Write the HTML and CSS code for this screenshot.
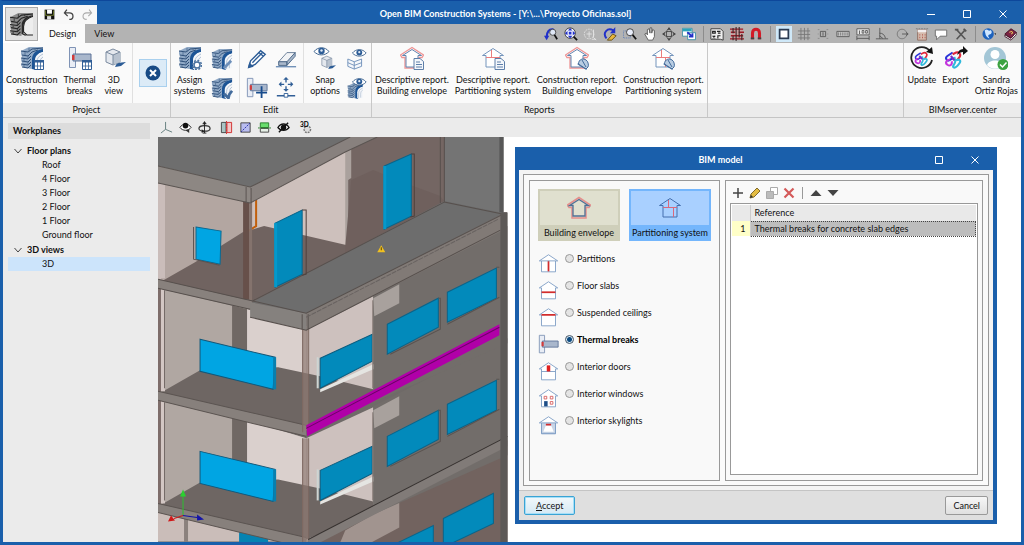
FILE: index.html
```html
<!DOCTYPE html>
<html lang="en">
<head>
    <meta charset="UTF-8">
    <meta name="viewport" content="width=device-width, initial-scale=1.0">
    <title>Open BIM Construction Systems</title>
    <link rel="stylesheet" href="styles.css">
</head>
<body>
    <!-- Shared icons -->
    <svg class="sprite" aria-hidden="true">
        <symbol id="layers" viewBox="0 0 24 24">
            <path d="M1 5 9 1h14v3l-7 2-4 6v11l-6-1-5-2 1-3-1-3 1-3-1-3z" fill="#90a9c6"/>
            <path d="M1 5l7 1 4-3 11-1M2 9l6 1 4-4 6-2M1 12l7 1 3-3M2 15l6 1 3-3M1 18l7 1 3-3M2 21l6 1 3-3" fill="none" stroke="#2f5079" stroke-width="1"/>
            <path d="M5 6v3M9 2v4M4 13v2M8 10v3M8 16v3M4 19v2M15 2v2" fill="none" stroke="#4b6a90" stroke-width=".8"/>
            <path d="M23 3c-7 1-10 4-11 9v11l4 1V13c1-4 3-6 7-7z" fill="#1c5495"/>
            <path d="M23 6c-5 1-8 4-8 8v9h3l5-1z" fill="#f3f6fa"/>
            <path d="M23 8c-4 2-6 4-6 8v7M23 11c-2 1-3 3-3 6v5" fill="none" stroke="#9fb2c8" stroke-width=".8"/>
        </symbol>
        <symbol id="layers-dark" viewBox="0 0 24 24">
            <path d="M1 5 9 1h14v3l-7 2-4 6v11l-6-1-5-2 1-3-1-3 1-3-1-3z" fill="#8c8c8c"/>
            <path d="M1 5l7 1 4-3 11-1M2 9l6 1 4-4 6-2M1 12l7 1 3-3M2 15l6 1 3-3M1 18l7 1 3-3M2 21l6 1 3-3" fill="none" stroke="#222" stroke-width="1"/>
            <path d="M5 6v3M9 2v4M4 13v2M8 10v3M8 16v3M4 19v2M15 2v2" fill="none" stroke="#333" stroke-width=".8"/>
            <path d="M23 3c-7 1-10 4-11 9v9l4 2V13c1-4 3-6 7-7z" fill="#2a2a2a"/>
            <path d="M23 4c-6 2-9 5-9 10v7l9 1z" fill="#eee"/>
            <path d="M23 4c-6 2-9 5-9 10v5l3 3h6" fill="none" stroke="#222"/>
        </symbol>
        <symbol id="sheet" viewBox="0 0 24 24">
            <path d="M14.500 14.500h9v9h-9z" fill="#fff" stroke="#315f97"/>
            <path d="M14 14h10v2.500H14z" fill="#315f97"/>
            <path d="M14 20h10M17.500 15v8M20.500 15v8" stroke="#315f97" stroke-width=".8" fill="none"/>
        </symbol>
        <symbol id="tbreak" viewBox="0 0 24 24">
            <path d="M1.500 1.500h6v20h-6z" fill="#e9edf5" stroke="#7f93b5"/>
            <path d="M5 8h18v7H5z" fill="#a9b7cc" stroke="#5c7398"/>
            <path d="M4 9h2.500v5H4z" fill="#d23b3b"/>
        </symbol>
        <symbol id="house" viewBox="0 0 24 24">
            <path d="M.5 9 12 1.500 23.500 9 22 11.500h-3V22H5V11.500H2z" fill="#fff" stroke="#ee9595" stroke-width="1.300"/>
            <path d="M2.500 9.500 12 3.500l9.500 6H18V21H6V9.500z" fill="none" stroke="#6084b0"/>
        </symbol>
        <symbol id="house-parts" viewBox="0 0 24 24">
            <path d="M1.500 9.500 12 2.500l10.500 7H19V21H5V9.500z" fill="#fff" stroke="#7595bc"/>
            <path d="M5 11.500h14M10.500 4v7.500M14.500 11.500V21" stroke="#ec7e7e" fill="none"/>
        </symbol>
        <symbol id="outline" viewBox="0 0 24 24">
            <path d="M1.500 9 12 2l10.500 7H20v12.500H4V9z" fill="#fff" stroke="#7b9cc4"/>
        </symbol>
        <symbol id="doc" viewBox="0 0 24 24">
            <path d="M14 12.500h6l3.500 3v8H14z" fill="#f4f7fb" stroke="#5e7fa9"/>
            <path d="M16 16h4M16 18.500h6M16 21h6" stroke="#5e7fa9" fill="none"/>
        </symbol>
        <symbol id="helmet" viewBox="0 0 24 24">
            <path d="M13.500 18c0-5 5-6 7.500-4 2 1 3 5 2 7l-2 2z" fill="#b9cde2" stroke="#446c9c"/>
            <path d="m12.500 18 9 5.500M17 14l4 7" stroke="#446c9c" fill="none"/>
        </symbol>
        <symbol id="eye" viewBox="0 0 24 24">
            <path d="M1 5.500C5 .5 12 .5 16 5.500 12 10 5 10 1 5.500z" fill="#fff" stroke="#40658f"/>
            <circle cx="8.500" cy="5" r="3.200" fill="#2c5c96"/><circle cx="8.500" cy="4.500" r="1.200" fill="#dfeaf6"/>
        </symbol>
        <symbol id="cube" viewBox="0 0 24 24">
            <path d="m15 17 9-1-5 4-6 1z" fill="#2c5c96"/>
            <path d="m4 6 7-3 7 3v10l-7 3-7-3z" fill="#e4e8ee" stroke="#7b8ba0"/>
            <path d="m11 9 7-3v10l-7 3z" fill="#b8c2cf"/>
            <path d="m4 6 7 3 7-3M11 9v10" fill="none" stroke="#7b8ba0"/>
        </symbol>
        <symbol id="knot" viewBox="0 0 24 24">
            <g fill="none" stroke-width="2.400">
                <path d="M11 4 5 8c-3 2-1 6 2 5l5-3" stroke="#2a35d8"/>
                <path d="m11 6 4-2c3-1 6 2 4 5l-3 4" stroke="#e0283c"/>
                <path d="M8 12c-4 0-6 4-3 6s6 0 5-4" stroke="#c435dd"/>
                <path d="m13 9 1 5c0 3-4 6-2 7s5-2 7-5-1-5-4-3" stroke="#2fb9dc"/>
                <path d="m9 8 4 5" stroke="#7a2bc8"/>
            </g>
        </symbol>
    </svg>

    <div class="window">
        <header class="app-head">
            <button class="app-menu" aria-label="Application menu"><svg viewBox="0 0 24 24"><use href="#layers-dark"/></svg></button>
            <div class="head-rows">
                <div class="titlebar">
                    <div class="quick">
                        <button aria-label="Save"><svg viewBox="0 0 16 16"><path d="M2 2h12v12H2z" fill="#111"/><path d="M5 2h6v5H5z" fill="#fff"/><path d="M3 3v6h10V3" fill="none" stroke="#7d8a33"/><path d="M5 10h5v4H5z" fill="#ddd"/></svg></button>
                        <button aria-label="Undo"><svg viewBox="0 0 16 16"><path d="M6 2 3 6l4 4M3 6h6c6 0 6 8 0 8" fill="none" stroke="#444" stroke-width="1.600"/></svg></button>
                        <button aria-label="Redo"><svg viewBox="0 0 16 16"><path d="m10 2 3 4-4 4M13 6H7c-6 0-6 8 0 8" fill="none" stroke="#aaa" stroke-width="1.300"/></svg></button>
                    </div>
                    <h1>Open BIM Construction Systems - [Y:\...\Proyecto Oficinas.sol]</h1>
                    <div class="win-buttons">
                        <button aria-label="Minimize"><svg viewBox="0 0 10 10"><path d="M1 5.500h8"/></svg></button>
                        <button aria-label="Maximize"><svg viewBox="0 0 10 10"><path d="M1.500 1.500h7v7h-7z"/></svg></button>
                        <button aria-label="Close"><svg viewBox="0 0 10 10"><path d="m1.500 1.500 7 7m0-7-7 7"/></svg></button>
                    </div>
                </div>
                <nav class="tabs">
                    <button class="tab active">Design</button>
                    <button class="tab">View</button>
                    <div class="tab-tools">
                        <div class="tool-set set-8">
                            <button aria-label="Previous view"><svg viewBox="0 0 16 16"><path d="M3 12C3 5 6 2 11 3" stroke="#2231c9" stroke-width="2.500" fill="none"/><path d="m0 10 6 0-3 5z" fill="#2231c9"/><circle cx="10" cy="6" r="3.500" fill="#dfe7f5" stroke="#444"/><path d="m12 9 3 5" stroke="#111" stroke-width="2"/></svg></button>
                            <button aria-label="Zoom all"><svg viewBox="0 0 16 16"><circle cx="7" cy="7" r="6" fill="#f1f3ff" stroke="#333"/><path d="m7 1 2.500 3h-5zM7 13l2.500-3h-5zM1 7l3-2.500v5zM13 7l-3-2.500v5zM5.500 5.500h3v3h-3z" fill="#2231c9"/><path d="m11 11 4 4" stroke="#111" stroke-width="2"/></svg></button>
                            <button aria-label="Zoom out"><svg viewBox="0 0 16 16"><circle cx="7" cy="8" r="5.500" fill="none" stroke="#e5e5e5" stroke-dasharray="2 1"/><path d="M7 5v7M4 8h6M12 3v9l3 3M10 14h5" fill="none" stroke="#e5e5e5"/></svg></button>
                            <button aria-label="Redraw"><svg viewBox="0 0 16 16"><path d="M4 13C-1 7 5 0 12 4" fill="none" stroke="#2231c9" stroke-width="2.200"/><path d="M14 0v7H8z" fill="#2231c9"/><path d="m5 15 6-7 4 2-5 5z" fill="#e8b53a" stroke="#5e4a17"/></svg></button>
                            <button aria-label="Zoom window"><svg viewBox="0 0 16 16"><path d="M.5 4.500h8v8h-8z" fill="none" stroke="#5577b5" stroke-dasharray="1 1"/><circle cx="8" cy="6" r="4" fill="#e9eefa" stroke="#333"/><path d="m11 9 4 5" stroke="#111" stroke-width="2"/></svg></button>
                            <button aria-label="Pan"><svg viewBox="0 0 16 16"><path d="m2 8 2-1 1 2V3l2-1 1 5V1h2v6l1-4 2 1v7l-2 4H6z" fill="#fff" stroke="#555"/></svg></button>
                            <button aria-label="Orbit"><svg viewBox="0 0 16 16"><ellipse cx="8" cy="8" rx="6" ry="3" fill="none" stroke="#444"/><ellipse cx="8" cy="8" rx="3" ry="6" fill="none" stroke="#444"/><path d="m8 0 2 3H6zM8 16l2-3H6zM0 8l3-2v4zM16 8l-3-2v4z" fill="#444"/></svg></button>
                            <button aria-label="Switch window"><svg viewBox="0 0 16 16"><path d="M.5 1.500h11v9H.5z" fill="#fff" stroke="#378da3"/><path d="M1 2h10v3H1z" fill="#2aa5ba"/><path d="M6.500 6.500h9v8h-9z" fill="#fff" stroke="#378da3"/><path d="m6 6 6 5m0-4v4H8" fill="none" stroke="#2231c9" stroke-width="2"/></svg></button>
                        </div>
                        <div class="tool-set set-3">
                            <button aria-label="DXF templates"><svg viewBox="0 0 16 16"><path d="M1 2h11l3 3v10l-3-1H1z" fill="#eee" stroke="#333"/><path d="M3 5h3v2H3zM8 5h4M9 7h3M3 10l3 3m0-3-3 3M9 13v-3h3" fill="none" stroke="#222" stroke-width="1.300"/></svg></button>
                            <button aria-label="Reference grid"><svg viewBox="0 0 16 16"><path d="M1 2h14v12H1z" fill="#c9a0a0"/><path d="M0 2.500h15M1 6h5M10 6h6M1 10h14M0 13.500h16" stroke="#9b1c27" stroke-width="1.500"/><path d="M3.500 1v6M7 0v16M10.500 0v12M13.500 8v7M3.500 10v5" stroke="#3d2a2c" stroke-width="1.300"/></svg></button>
                            <button aria-label="Object snaps"><svg viewBox="0 0 16 16"><path d="M4 14V7c0-6 8-6 8 0v7" fill="none" stroke="#d31c28" stroke-width="3.500"/><path d="M2 12h4v2H2zM10 12h4v2h-4z" fill="#444"/></svg></button>
                        </div>
                        <div class="tool-set set-10">
                            <button class="selected" aria-label="Frame"><svg viewBox="0 0 16 16"><path d="M3 3h10v10H3z" fill="#fff" stroke="#2b3b52" stroke-width="2"/></svg></button>
                            <button aria-label="Grid"><svg viewBox="0 0 16 16"><path d="M4.500 1v14M8.500 1v14M12.500 1v14M1 4.500h14M1 8.500h14M1 12.500h14" stroke="#777"/></svg></button>
                            <button aria-label="Snap point"><svg viewBox="0 0 16 16"><path d="M5 5h6v6H5z" fill="none" stroke="#555"/><path d="M8 6v4" stroke="#555"/><path d="M2 3h2M12 3h2M2 13h2M12 13h2M2 8h1M13 8h1" stroke="#888"/></svg></button>
                            <button aria-label="Keyboard"><svg viewBox="0 0 16 16"><path d="M1 5h14v6H1z" fill="#ccc" stroke="#555"/><path d="M2 7h12M2 9h12" stroke="#555" stroke-dasharray="1.500 1"/></svg></button>
                            <button aria-label="Dimensions"><svg viewBox="0 0 16 16"><path d="M1 2h14v7H1z" fill="#e8e8e8" stroke="#555"/><path d="M1 13h14M1 10v5M15 10v5M4 4v4M7 4h2v3H7zM11 4h2v3h-2z" fill="none" stroke="#555"/></svg></button>
                            <button aria-label="Angle"><svg viewBox="0 0 16 16"><path d="M1 13.500h14M5.500 1v12.500M5 7c4 0 6 2 7 6M5 10l4 3" fill="none" stroke="#555"/></svg></button>
                            <button aria-label="Polar"><svg viewBox="0 0 16 16"><circle cx="8" cy="8" r="5.500" fill="none" stroke="#777"/><path d="M8 8h7m-2-2 2 2-2 2" fill="none" stroke="#555"/></svg></button>
                            <button aria-label="Calculator"><svg viewBox="0 0 16 16"><path d="M3 3h10v12H3z" fill="#d6bcae" stroke="#8d6a5e"/><path d="M3 3h10v3H3z" fill="#f2eeee"/><path d="M5 9h1M8 9h1M11 9h1M5 12h1M8 12h1M11 12h1" stroke="#b0574c" stroke-width="1.500"/><path d="M1 2h14" stroke="#777" stroke-dasharray="2 1"/></svg></button>
                            <button aria-label="Comment"><svg viewBox="0 0 16 16"><path d="M1.500 3.500h13v7H7l-4 4v-4H1.500z" fill="#fff" stroke="#666"/></svg></button>
                            <button aria-label="Settings"><svg viewBox="0 0 16 16"><path d="m3 3 10 11M13 3 3 14" stroke="#555" stroke-width="1.700"/><path d="M1 3h4M11 2l3 3" stroke="#555" stroke-width="2"/></svg></button>
                        </div>
                        <div class="tool-set set-2">
                            <button aria-label="Web"><svg viewBox="0 0 16 16"><circle cx="7" cy="8" r="6.500" fill="#1d62bd"/><path d="M3 4c3-3 4 1 6 0s3 3 1 4-4 1-2 4-4-1-4-4z" fill="#cfe6ff"/><path d="M14 7h3l-1.500 2z" fill="#333"/></svg></button>
                            <button aria-label="Help"><svg viewBox="0 0 16 16"><path d="m1 8 7-6 6 4-6 7z" fill="#7d2444" stroke="#421226"/><path d="m1 9 7 4 6-7v3l-6 6-7-4z" fill="#fff" stroke="#421226"/><path d="m6 6 3-1 1 2-2 1" fill="none" stroke="#f5d75a"/></svg></button>
                        </div>
                    </div>
                </nav>
            </div>
        </header>

        <section class="ribbon">
            <div class="group">
                <div class="tools">
                    <button class="tool"><svg viewBox="0 0 24 24"><use href="#layers"/><use href="#sheet"/></svg>Construction<br>systems</button>
                    <button class="tool"><svg viewBox="0 0 24 24"><use href="#tbreak"/><use href="#sheet"/></svg>Thermal<br>breaks</button>
                    <button class="tool"><svg viewBox="0 0 24 24"><use href="#cube"/></svg>3D<br>view</button>
                    <span class="divider"></span>
                    <button class="tool-close" aria-label="Cancel tool"><svg viewBox="0 0 16 16"><circle cx="8" cy="8" r="7.500" fill="#174a85"/><path d="m5 5 6 6m0-6-6 6" stroke="#fff" stroke-width="2"/></svg></button>
                </div>
                <h2>Project</h2>
            </div>
            <div class="group">
                <div class="tools">
                    <button class="tool"><svg viewBox="0 0 24 24"><use href="#layers"/><circle cx="19" cy="19" r="3" fill="#fff" stroke="#4a729f" stroke-width="1.500"/><circle cx="19" cy="19" r="4.500" fill="none" stroke="#4a729f" stroke-width="1.500" stroke-dasharray="2 1.500"/></svg>Assign<br>systems</button>
                    <div class="stack">
                        <button aria-label="Edit system"><svg viewBox="0 0 24 24"><use href="#layers"/><path d="m14 22 8-8" stroke="#6d8fb9" stroke-width="3"/></svg></button>
                        <button aria-label="Copy system"><svg viewBox="0 0 24 24"><use href="#layers"/><path d="m14 18 5 5 1-4 3-4" fill="none" stroke="#446c9c" stroke-width="3"/></svg></button>
                    </div>
                    <span class="divider"></span>
                    <div class="stack two">
                        <button aria-label="Edit"><svg viewBox="0 0 24 24"><path d="m3 21 2-7L16 3l5 4-11 11z" fill="#fff" stroke="#2c5c96" stroke-width="1.500"/><path d="m7 16 11-11M14 5l5 4M3 21l4-1-3-3z" fill="#2c5c96" stroke="#2c5c96" stroke-width="1.500"/></svg></button>
                        <button aria-label="Erase"><svg viewBox="0 0 24 24"><path d="m4 15 9-10h9l-8 10z" fill="#f1f3f6" stroke="#667b95"/><path d="M4 15v4h9v-4zM13 15l9-10v4l-9 10z" fill="#a9b8ca" stroke="#496687"/><path d="M1 20.500h22" stroke="#2c5c96"/></svg></button>
                        <button aria-label="New thermal break"><svg viewBox="0 0 24 24"><use href="#tbreak"/><path d="M17 10v13M11 17h12" stroke="#174b8c" stroke-width="2"/></svg></button>
                        <button aria-label="Move"><svg viewBox="0 0 24 24"><path d="M12 2v4M12 10v4M6 8h4M14 8h4M2 20.500h20" stroke="#315f97" stroke-width="1.500"/><path d="m12 0 3 3H9zM12 16l3-3H9zM4 8l3-3v6zM20 8l-3-3v6z" fill="#315f97"/><path d="M10 18h4v4h-4z" fill="#fff" stroke="#315f97"/></svg></button>
                    </div>
                    <span class="divider"></span>
                    <button class="tool"><svg viewBox="0 0 24 24"><use href="#cube" x="6" y="8" width="17" height="17"/><use href="#eye"/></svg>Snap<br>options</button>
                    <div class="stack">
                        <button aria-label="Visible elements"><svg viewBox="0 0 24 24"><path d="m2 12 7 3 8-3v8l-8 3-7-3zM2 16l7 3 8-3M9 15v8" fill="#f4f7fb" stroke="#6d8fb9"/><use href="#eye" x="6"/></svg></button>
                        <button aria-label="Visible systems"><svg viewBox="0 0 24 24"><use href="#layers" x="1" y="6" width="18" height="18"/><use href="#eye" x="6"/></svg></button>
                    </div>
                </div>
                <h2>Edit</h2>
            </div>
            <div class="group">
                <div class="tools">
                    <button class="tool"><svg viewBox="0 0 24 24"><use href="#house"/><use href="#doc"/></svg>Descriptive report.<br>Building envelope</button>
                    <button class="tool"><svg viewBox="0 0 24 24"><use href="#house-parts"/><use href="#doc"/></svg>Descriptive report.<br>Partitioning system</button>
                    <button class="tool"><svg viewBox="0 0 24 24"><use href="#house"/><use href="#helmet"/></svg>Construction report.<br>Building envelope</button>
                    <button class="tool"><svg viewBox="0 0 24 24"><use href="#house-parts"/><use href="#helmet"/></svg>Construction report.<br>Partitioning system</button>
                </div>
                <h2>Reports</h2>
            </div>
            <div class="group filler">
                <div class="tools"></div>
                <h2></h2>
            </div>
            <div class="group">
                <div class="tools">
                    <button class="tool"><svg viewBox="0 0 24 24"><path d="M20 5a10.500 10.500 0 1 0 2 9" fill="none" stroke="#222" stroke-width="1.800"/><path d="m22 1 1 7-7-2z" fill="#111"/><use href="#knot" x="3" y="4" width="17" height="17"/></svg>Update</button>
                    <button class="tool"><svg viewBox="0 0 24 24"><use href="#knot" x="-1" y="3" width="21" height="21"/><path d="M13 9c1-4 3-6 6-6V0l5 5-5 4V6c-2 0-4 1-6 3z" fill="#111"/></svg>Export</button>
                    <button class="tool"><svg viewBox="0 0 24 24"><circle cx="11" cy="12" r="11" fill="#a3c6d6"/><circle cx="11" cy="8.500" r="4.500" fill="#fff"/><path d="M3 19c2-6 14-6 16 0-4 5-12 5-16 0z" fill="#fff"/><circle cx="19" cy="18.500" r="5.500" fill="#3da341"/><path d="m16 18.500 2.500 2.500 4-4.500" fill="none" stroke="#fff" stroke-width="1.500"/></svg>Sandra<br>Ortiz Rojas</button>
                </div>
                <h2>BIMserver.center</h2>
            </div>
        </section>

        <div class="workspace">
            <aside class="sidebar">
                <h2>Workplanes</h2>
                <ul class="tree">
                    <li>
                        <button class="branch"><svg viewBox="0 0 10 10"><path d="m1.500 3 3.500 4 3.500-4"/></svg>Floor plans</button>
                        <ul>
                            <li><button>Roof</button></li>
                            <li><button>4 Floor</button></li>
                            <li><button>3 Floor</button></li>
                            <li><button>2 Floor</button></li>
                            <li><button>1 Floor</button></li>
                            <li><button>Ground floor</button></li>
                        </ul>
                    </li>
                    <li>
                        <button class="branch"><svg viewBox="0 0 10 10"><path d="m1.500 3 3.500 4 3.500-4"/></svg>3D views</button>
                        <ul>
                            <li><button class="current">3D</button></li>
                        </ul>
                    </li>
                </ul>
            </aside>

            <main class="main">
                <div class="view-tools">
                    <button aria-label="Axes"><svg viewBox="0 0 14 14"><path d="M6 1v8M6 9l-5 4M6 9l7 3" fill="none" stroke="#5f7a7a"/></svg></button>
                    <button aria-label="Look"><svg viewBox="0 0 14 14"><path d="M1 7c3-5 9-5 12 0-3 4-9 4-12 0z" fill="#fff" stroke="#222"/><circle cx="7" cy="5" r="3" fill="#111"/><path d="m7 10 4 3v-4z" fill="#333"/></svg></button>
                    <button aria-label="Rotate"><svg viewBox="0 0 14 14"><ellipse cx="7" cy="8" rx="6" ry="3" fill="none" stroke="#333" stroke-width="1.300"/><path d="M7 2v11M5 13h4M5 3h4" stroke="#222"/><path d="m7 0 2 3H5zM4 9l3 2-3 2z" fill="#222"/></svg></button>
                    <button class="spaced" aria-label="Section X"><svg viewBox="0 0 14 14"><path d="M1.500 1.500h5v11h-5z" fill="#a9c4c4" stroke="#444"/><path d="M7.500 1.500h5v11h-5z" fill="#f2c9c9" stroke="#d02f2f"/><path d="M7 0v14" stroke="#d02f2f" stroke-dasharray="2 1"/></svg></button>
                    <button aria-label="Section Y"><svg viewBox="0 0 14 14"><path d="M2 2h10v10H2z" fill="#b9bdf0" stroke="#444"/><path d="M2 12 12 2" stroke="#2b32a8" stroke-dasharray="2 1"/></svg></button>
                    <button aria-label="Section Z"><svg viewBox="0 0 14 14"><path d="M2.500 2h9v5h-9z" fill="#68dd6d" stroke="#287c2b"/><path d="M2.500 8h9v4h-9z" fill="#e5efe5" stroke="#444"/><path d="M0 7.500h14" stroke="#287c2b" stroke-dasharray="2 1"/></svg></button>
                    <button aria-label="Hide"><svg viewBox="0 0 14 14"><path d="M1 7c3-5 9-5 12 0-3 4-9 4-12 0z" fill="#fff" stroke="#111" stroke-width="1.400"/><circle cx="7" cy="7" r="3" fill="#111"/><path d="M2 12 12 2" stroke="#111" stroke-width="1.500"/></svg></button>
                    <button class="spaced" aria-label="3D settings"><svg viewBox="0 0 14 14"><circle cx="9" cy="9" r="3.500" fill="#ddd" stroke="#777" stroke-width="1.500" stroke-dasharray="2 1"/><text x="1" y="6" font-size="7" font-weight="bold">3D</text></svg></button>
                </div>

                <div class="viewport">
                    <svg class="scene" viewBox="158 137 862 405" preserveAspectRatio="xMinYMin slice" role="img" aria-label="3D view of the building">
                        <defs>
                            <!-- One storey, seen from the corner -->
                            <g id="storey">
                                <path d="M158 287 248 308 306 326V426L158 392z" fill="#b0a7a2"/>
                                <path d="M232 305 247 309V380H232z" fill="#706864"/>
                                <path d="M247 308 306 326V426L247 400z" fill="#dad0cd"/>
                                <path d="M306 326 373 295V395L306 430z" fill="#cdc1be"/>
                                <path d="M165 390 200 370 278 367 320 376 373 389V398L306 427 158 393z" fill="#6e6663"/>
                                <path d="M158 287h3v105h-3z" fill="#7d6d6a"/>
                                <path d="M161 288h4v103h-4z" fill="#d3c7c4"/>
                                <path d="M164.500 290v98" stroke="#756b68"/>
                                <path d="M373 294 507 226V343L373 402z" fill="#726d6a"/>
                                <path d="M373 298 399 284V303L374 316z" fill="#a8a19d"/>
                                <path d="M158 391 306 425V436L158 400z" fill="#87807c"/>
                                <path d="M158 391 306 425M158 400 306 436" stroke="#5b5451" fill="none"/>
                                <path d="M302 326h6v104h-6z" fill="#8f7a73" opacity=".7"/>
                                <path d="M302.500 326v106M308.500 326v106" stroke="#7c6861" fill="none"/>
                                <path d="M200 339 275 357 273 389 200 371z" fill="#00a5e3" stroke="#12587a"/>
                                <path d="M273 357h3v32h-3z" fill="#087fae"/>
                                <path d="M320 389 373 364V369L320 392z" fill="#e5e5e2"/>
                                <path d="M320 358 372 334V361L320 388z" fill="#028abb" stroke="#0b5c7e"/>
                                <path d="M317.500 357v31" stroke="#cdd5d3" stroke-width="2"/>
                                <path d="M372.500 300v88" stroke="#857a76"/>
                                <path d="M387 324 438 298V327L387 354z" fill="#028abb" stroke="#0a648a"/>
                                <path d="M438 298h2v31l-50 25" fill="none" stroke="#5a5350"/>
                                <path d="M447 292 496 268V298L447 322z" fill="#028abb" stroke="#0a648a"/>
                                <path d="M496 267h3M447 324l52-27" fill="none" stroke="#5a5350"/>
                            </g>
                        </defs>
                        <path d="M158 137H503V212H507V542H158z" fill="#6f6a68"/>

                        <!-- Ground storey -->
                        <path d="M158 505 306 541H158z" fill="#cabdb9"/>
                        <path d="M184 510h4v32h-4z" fill="#8b817d"/>
                        <path d="M239 530 268 536V542H239z" fill="#0583b2"/>
                        <path d="M306 541 507 440V542H306z" fill="#72635f"/>
                        <path d="M345 530 399 499V527L371 542H340z" fill="#a1948f"/>
                        <path d="M398 542 433 525V542z" fill="#028abb" stroke="#0a648a"/>
                        <path d="M443 518 493 493V523L453 542H443z" fill="#028abb" stroke="#0a648a"/>

                        <use href="#storey" y="112"/>
                        <path d="M308 539 507 436V446L320 542H308z" fill="#817b78"/>
                        <path d="M308 539 507 436" stroke="#36312f" fill="none"/>
                        <use href="#storey"/>

                        <!-- Selected slab edge -->
                        <path d="M306 425 499 324V335L307 436z" fill="#b000a8"/>
                        <path d="M306 428 499 327" stroke="#6d0068" fill="none"/>

                        <!-- Top storey -->
                        <path d="M158 165 250 187V302L158 281z" fill="#b3a6a1"/>
                        <path d="M250 187 375 137H445V202L252 302z" fill="#746663"/>
                        <path d="M250 190 347 148V247L264 227 250 233z" fill="#cdc0bc"/>
                        <path d="M345 150 351 147V178L348 180V246H345z" fill="#aaa19d"/>
                        <path d="M160 282 195 262 243 232 264 226 347 245 345 255 252 301z" fill="#706360"/>
                        <path d="M351 180 373 170 410 185 440 196 445 203 345 255V247z" fill="#6f605d"/>
                        <path d="M158 184h3v96h-3zM161 184h4v94h-4z" fill="#cabdba"/>
                        <path d="M256 200v26l-8 5" fill="none" stroke="#c15f0c" stroke-width="2"/>
                        <path d="M243 198h6v101h-6z" fill="#67504a"/>
                        <path d="M249 198h3v102h-3z" fill="#84736d"/>
                        <path d="M158 137H350L250 187 158 166z" fill="#6e6e6e"/>
                        <path d="M158 166 250 187V203L158 183z" fill="#8d8783"/>
                        <path d="M250 187 350 137H377L345 152 250 203z" fill="#88817e"/>
                        <path d="M158 166 250 187 350 137M158 183 250 203M250 203 345 152 377 137M246 187v15M251 188v15" fill="none" stroke="#5b5552"/>

                        <!-- Terrace -->
                        <path d="M444 137H503V214L444 202z" fill="#747474"/>
                        <path d="M499 137h4v77h-4z" fill="#575757"/>
                        <path d="M252 302 444 201 503 213 306 314z" fill="#6d6d6d"/>
                        <path d="M158 279 252 301V310L158 288z" fill="#88817d"/>
                        <path d="M250 302 306 313V330L250 317z" fill="#85817e"/>
                        <path d="M306 313 503 214V230L306 330z" fill="#817a76"/>
                        <path d="M158 279 306 313 503 214M158 288 250 309M250 317 306 330 500 230M302 314v15M308 314v15M444 137v65l58 12M252 301 444 202M440 137v66" fill="none" stroke="#57504d"/>
                        <path d="M306 317 498 219" fill="none" stroke="#686260" stroke-dasharray="5 1"/>
                        <path d="M500 213h7v329h-7z" fill="#5c5957"/>

                        <!-- Openings -->
                        <path d="M196 227 221 231 220 264 196 259z" fill="#00a5e3" stroke="#0c688f"/>
                        <path d="M193.500 227v32l26 6" fill="none" stroke="#5d5350"/>
                        <path d="M275 223 302 210V274L275 287z" fill="#028abb" stroke="#0a648a"/>
                        <path d="M274 223h3v64h-3z" fill="#0499cb"/>
                        <path d="M302 210h4v64l-4 1" fill="none" stroke="#50413d"/>
                        <path d="M384 166 411 154V216L384 229z" fill="#028abb" stroke="#0a648a"/>
                        <path d="M383 166h3v63h-3z" fill="#0499cb"/>
                        <path d="M411 154h3v62l-4 1" fill="none" stroke="#50413d"/>

                        <!-- Warning and axes -->
                        <path d="M381 245 385 252H377z" fill="#f0c020"/>
                        <path d="M381 247v3" stroke="#5a4200"/>
                        <path d="M183 515V494" stroke="#2bc02f"/>
                        <path d="m183 489 3 7h-6z" fill="#2bd030"/>
                        <path d="m183 515-9 3" stroke="#d01818"/>
                        <path d="m168 521 3-6 4 5z" fill="#d01818"/>
                        <path d="m183 515 14 2" stroke="#1414a8"/>
                        <path d="m204 519-7-5v6z" fill="#1414a8"/>
                    </svg>

                    <div class="dialog" role="dialog" aria-labelledby="dialogTitle">
                        <div class="dialog-title">
                            <h2 id="dialogTitle">BIM model</h2>
                            <div class="win-buttons">
                                <button aria-label="Maximize dialog"><svg viewBox="0 0 10 10"><path d="M1.500 1.500h7v7h-7z"/></svg></button>
                                <button aria-label="Close dialog"><svg viewBox="0 0 10 10"><path d="m1.500 1.500 7 7m0-7-7 7"/></svg></button>
                            </div>
                        </div>
                        <div class="dialog-frame">
                            <div class="panel types">
                                <div class="tiles">
                                    <button class="tile"><span class="tile-icon"><svg viewBox="0 0 24 24"><path d="M.5 9 12 1.500 23.500 9 22 11.500h-3V22H5V11.500H2z" fill="none" stroke="#e58f8c" stroke-width="1.500"/><path d="M2.500 9.500 12 3.500l9.500 6H18V20H6V9.500z" fill="none" stroke="#4f6f95" stroke-width="1.300"/></svg></span>Building envelope</button>
                                    <button class="tile chosen"><span class="tile-icon"><svg viewBox="0 0 24 24"><path d="M1.500 9.500 12 2.500l10.500 7H19V21H5V9.500z" fill="none" stroke="#446fae"/><path d="M5 11.500h14M10.500 4v7.500M15.500 11.500V21" stroke="#d8687c" fill="none"/></svg></span>Partitioning system</button>
                                </div>
                                <div class="options">
                                    <div class="option"><svg viewBox="0 0 24 24"><use href="#outline"/><path d="M12 9v12" stroke="#d22d2d" stroke-width="2"/><path d="M4 9h16" stroke="#7b9cc4"/></svg><input type="radio" name="element" id="partitions"><label for="partitions">Partitions</label></div>
                                    <div class="option"><svg viewBox="0 0 24 24"><use href="#outline"/><path d="M4 14h16" stroke="#d22d2d" stroke-width="2"/></svg><input type="radio" name="element" id="slabs"><label for="slabs">Floor slabs</label></div>
                                    <div class="option"><svg viewBox="0 0 24 24"><use href="#outline"/><path d="M4 9h16" stroke="#d22d2d" stroke-width="2"/></svg><input type="radio" name="element" id="ceilings"><label for="ceilings">Suspended ceilings</label></div>
                                    <div class="option"><svg viewBox="0 0 24 24"><use href="#tbreak"/></svg><input type="radio" name="element" id="breaks" checked><label for="breaks">Thermal breaks</label></div>
                                    <div class="option"><svg viewBox="0 0 24 24"><use href="#outline"/><path d="M4 12h16" stroke="#7b9cc4"/><path d="M10 5h4v7h-4z" fill="#e02020"/></svg><input type="radio" name="element" id="doors"><label for="doors">Interior doors</label></div>
                                    <div class="option"><svg viewBox="0 0 24 24"><use href="#outline"/><path d="M7 9.500h3v3H7zM14 9.500h3v3h-3zM14 15.500h3v3h-3z" fill="none" stroke="#d65a5a"/><path d="M7 15h4v6H7z" fill="#1d4d87"/></svg><input type="radio" name="element" id="windows"><label for="windows">Interior windows</label></div>
                                    <div class="option"><svg viewBox="0 0 24 24"><use href="#outline"/><path d="M4 9h16v12H4z" fill="#c9d5e6" stroke="#7b9cc4"/><path d="M9 12h6l3 7H6z" fill="#fff"/><path d="M9 11h6" stroke="#d22d2d" stroke-width="2"/></svg><input type="radio" name="element" id="skylights"><label for="skylights">Interior skylights</label></div>
                                </div>
                            </div>
                            <div class="panel list">
                                <div class="list-tools">
                                    <button aria-label="Add"><svg viewBox="0 0 12 12"><path d="M6 1v10M1 6h10" stroke="#444" stroke-width="1.500"/></svg></button>
                                    <button aria-label="Edit row"><svg viewBox="0 0 12 12"><path d="m1 11 1-4 6-6 3 3-6 6z" fill="#e5bd42" stroke="#806b2c"/><path d="m1 11 1-3 2 2z" fill="#333"/></svg></button>
                                    <button aria-label="Copy row"><svg viewBox="0 0 12 12"><path d="M4.500.5h7v7h-7z" fill="#fff" stroke="#aaa"/><path d="M.5 4.500h7v7h-7z" fill="#bbb" stroke="#aaa"/></svg></button>
                                    <button aria-label="Delete row"><svg viewBox="0 0 12 12"><path d="m1.500 1.500 9 9m0-9-9 9" stroke="#d45a5a" stroke-width="2.200"/></svg></button>
                                    <span class="bar"></span>
                                    <button aria-label="Move up"><svg viewBox="0 0 12 12"><path d="m6 3 5.500 6H.5z" fill="#444"/></svg></button>
                                    <button aria-label="Move down"><svg viewBox="0 0 12 12"><path d="m6 9 5.500-6H.5z" fill="#444"/></svg></button>
                                </div>
                                <div class="table-box">
                                    <table>
                                        <thead><tr><th class="num"></th><th>Reference</th></tr></thead>
                                        <tbody><tr><td class="num">1</td><td class="picked">Thermal breaks for concrete slab edges</td></tr></tbody>
                                    </table>
                                </div>
                            </div>
                        </div>
                        <div class="dialog-foot">
                            <button class="push default"><u>A</u>ccept</button>
                            <button class="push">Cancel</button>
                        </div>
                    </div>
                </div>
            </main>
        </div>
    </div>
</body>
</html>
```
FILE: styles.css
```css
* {
    box-sizing: border-box;
}
body {
    margin: 0;
    font-family: Lato, "Open Sans", sans-serif;
    font-size: 9px;
    line-height: 12px;
    color: #111;
}
h1, h2 {
    margin: 0;
    font-size: 9px;
}
ul {
    margin: 0;
    padding: 0;
    list-style: none;
}
button {
    padding: 0;
    border: none;
    background: none;
    font: inherit;
    color: inherit;
    cursor: pointer;
}
svg {
    display: block;
}
.sprite {
    display: none;
}
.window {
    display: flex;
    flex-direction: column;
    height: 100vh;
    border: 3px solid #1a5fab;
    border-top: 1px solid #0d479b;
    background: #fff;
    overflow: hidden;
}

/* Title bar and tabs */
.app-head {
    display: flex;
    background: #1a5fab;
}
.app-menu {
    width: 37px;
    margin-top: 4px;
    border: 2px solid #fff;
    outline: 1px solid #aaa;
    outline-offset: -3px;
    background: #e3e3e3;
}
.app-menu svg {
    width: 25px;
    height: 25px;
    margin: 0 auto;
}
.head-rows {
    flex: 1;
}
.titlebar {
    display: flex;
    align-items: flex-end;
    height: 23px;
    color: #fff;
}
.titlebar h1 {
    flex: 1;
    padding: 0 12px 4px 0;
    text-align: center;
}
.quick {
    display: flex;
    align-items: center;
    gap: 6px;
    height: 19px;
    padding: 0 3px;
    background: #f8f8f8;
}
.quick svg {
    width: 13px;
    height: 13px;
}
.win-buttons {
    display: flex;
    gap: 26px;
    padding: 0 13px 5px 0;
}
.win-buttons svg {
    width: 10px;
    height: 10px;
    fill: none;
    stroke: #fff;
}
.tabs {
    display: flex;
    height: 19px;
    background: #b3b3b3;
}
.tab {
    padding: 0 9px;
}
.tab.active {
    background: #fafafa;
}
.tab-tools {
    display: flex;
    align-items: center;
    margin-left: auto;
}
.tool-set {
    display: flex;
    justify-content: space-between;
    margin-right: 12px;
}
.tool-set + .tool-set {
    position: relative;
}
.tool-set + .tool-set::before {
    content: "";
    position: absolute;
    left: -6px;
    height: 16px;
    border-left: 1px solid #8c8c8c;
}
.tool-set svg {
    width: 14px;
    height: 14px;
    margin: 1px;
}
.set-8 {
    width: 154px;
}
.set-3 {
    width: 55px;
}
.set-10 {
    width: 193px;
}
.set-2 {
    width: 38px;
    margin-right: 2px;
}
.tool-set .selected {
    background: #cfe8f8;
}

/* Ribbon */
.ribbon {
    display: flex;
    background: #fafafa;
    border-bottom: 1px solid #c4c4c4;
}
.group {
    display: flex;
    flex-direction: column;
    border-right: 1px solid #c8c8c8;
}
.group:last-child {
    border-right: none;
}
.group h2 {
    height: 14px;
    background: #ebebeb;
    font-weight: normal;
    line-height: 14px;
    text-align: center;
}
.filler {
    flex: 1;
}
.tools {
    display: flex;
    align-items: center;
    gap: 6px;
    height: 60px;
    padding: 0 3px;
}
.tool {
    align-self: flex-start;
    padding-top: 3px;
    line-height: 11px;
    text-align: center;
}
.tool svg {
    width: 24px;
    height: 24px;
    margin: 0 auto 4px;
}
.divider {
    align-self: stretch;
    border-left: 1px solid #e0e0e0;
}
.tool-close {
    padding: 5px;
    border: 1px solid #a9d0ee;
    background: #dcebf7;
}
.tool-close svg {
    width: 16px;
    height: 16px;
}
.stack {
    display: grid;
    gap: 7px;
}
.stack.two {
    grid-template-columns: auto auto;
}
.stack svg {
    width: 22px;
    height: 22px;
}

/* Sidebar */
.workspace {
    flex: 1;
    display: flex;
    min-height: 0;
}
.sidebar {
    width: 155px;
    padding: 5px 8px 0 5px;
    background: #ebebeb;
}
.sidebar h2 {
    padding: 2px 5px;
    background: #dcdcdc;
}
.tree {
    padding-top: 4px;
}
.tree button {
    display: block;
    width: 100%;
    height: 14px;
    padding-left: 34px;
    line-height: 14px;
    text-align: left;
}
.tree .branch {
    display: flex;
    align-items: center;
    gap: 4px;
    height: 15px;
    padding-left: 5px;
    font-weight: bold;
}
.branch svg {
    width: 10px;
    height: 10px;
    fill: none;
    stroke: #444;
}
.tree .current {
    background: #cce4fb;
}

/* 3D view */
.main {
    flex: 1;
    display: flex;
    flex-direction: column;
}
.view-tools {
    display: flex;
    align-items: center;
    gap: 6px;
    height: 19px;
    padding-left: 2px;
    background: #ebebeb;
}
.view-tools svg {
    width: 13px;
    height: 13px;
}
.view-tools .spaced {
    margin-left: 3px;
}
.viewport {
    flex: 1;
    position: relative;
    min-height: 0;
}
.scene {
    width: 100%;
    height: 100%;
}

/* Dialog */
.dialog {
    position: absolute;
    top: 10px;
    right: 24px;
    width: 482px;
    padding: 0 4px 4px;
    background: #1a5fab;
}
.dialog-title {
    display: flex;
    align-items: center;
    height: 23px;
    padding-top: 3px;
    color: #fff;
}
.dialog-title h2 {
    flex: 1;
    padding-right: 12px;
    text-align: center;
}
.dialog-title .win-buttons {
    padding: 0 13px 0 0;
}
.dialog-frame {
    display: flex;
    gap: 5px;
    height: 320px;
    padding: 6px 6px 4px;
    border: 4px solid #f4f4f4;
    border-bottom-width: 5px;
    background: #fafafa;
    outline: 1px solid #999;
    outline-offset: -5px;
}
.panel {
    border: 1px solid #999;
    background: #f9f9f9;
}
.types {
    width: 191px;
    padding: 8px;
}
.tiles {
    display: flex;
    gap: 9px;
}
.tile {
    flex: 1;
    padding: 2px 0;
    background: #cfcfba;
    white-space: nowrap;
}
.tile-icon {
    display: block;
    margin: 0 2px 2px;
    padding: 5px 0;
    background: #e0e0cf;
}
.tile svg {
    width: 24px;
    height: 24px;
    margin: 0 auto;
}
.tile.chosen {
    background: #74b6fc;
}
.chosen .tile-icon {
    background: #a9d0ff;
}
.options {
    padding-top: 12px;
}
.option {
    display: flex;
    align-items: flex-start;
    height: 27px;
}
.option svg {
    width: 21px;
    height: 21px;
    margin-right: 6px;
}
.option input {
    appearance: none;
    width: 9px;
    height: 9px;
    margin: 1px 3px 0 0;
    border: 1px solid #999;
    border-radius: 50%;
    background: #e4e4e4;
}
.option input:checked {
    border-color: #456;
    background: radial-gradient(circle, #0c4a80 2px, #d9eaf5 3px);
}
.option input:checked + label {
    font-weight: bold;
    color: #000;
}
.list {
    flex: 1;
    padding: 6px 4px 5px;
    display: flex;
    flex-direction: column;
}
.list-tools {
    display: flex;
    align-items: center;
    gap: 5px;
    padding: 0 2px 4px;
}
.list-tools svg {
    width: 12px;
    height: 12px;
}
.list-tools .bar {
    height: 12px;
    margin: 0 2px;
    border-left: 1px solid #999;
}
.table-box {
    flex: 1;
    padding: 1px;
    border: 1px solid #999;
    background: #fff;
}
table {
    width: 100%;
    border-collapse: collapse;
}
th {
    height: 16px;
    padding: 0 4px;
    background: #e9e9e9;
    font-weight: normal;
    text-align: left;
}
td {
    height: 15px;
    padding: 0 4px;
    line-height: 13px;
}
.num {
    width: 18px;
    border-right: 1px solid #ccc;
    text-align: right;
}
td.num {
    background: #ffffc8;
}
.picked {
    border: 1px dotted #444;
    background: #bdbdbd;
}
.dialog-foot {
    display: flex;
    justify-content: space-between;
    padding: 5px;
    border-top: 1px solid #c4c4c4;
    background: #dfdfdf;
}
.push {
    height: 19px;
    padding: 0 7px;
    border: 1px solid #999;
    border-radius: 2px;
    background: linear-gradient(#f6f6f6, #e0e0e0);
}
.push.default {
    padding: 0 11px;
    border: 1px solid #3aa3d4;
    box-shadow: inset 0 0 0 1px #a5dff8;
    background: linear-gradient(#f2f8fb, #d5e9f4);
}
```
